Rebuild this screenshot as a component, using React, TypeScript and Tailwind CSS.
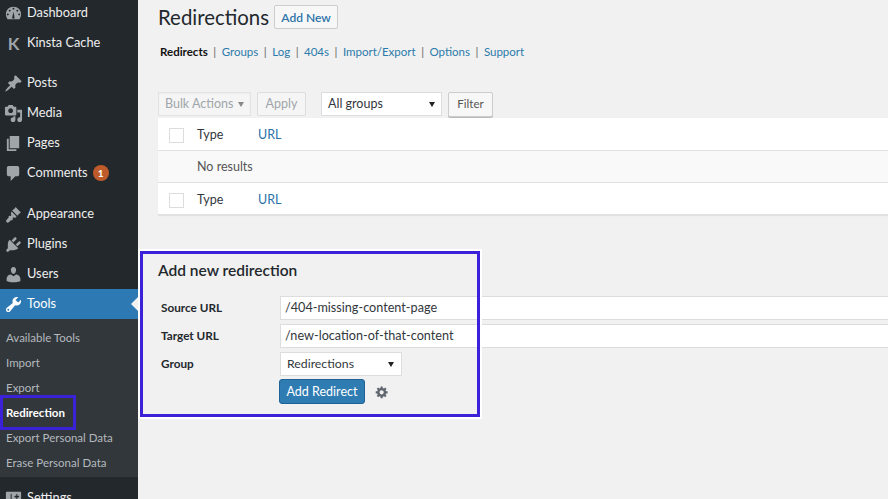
const font = "font-['Lato',sans-serif]"

// wp-admin menu glyphs
const icons: Record<string, string> = {
  dashboard:
    "M3.76 16h12.48c1.1-1.43 1.76-3.21 1.76-5.14C18 6.18 14.42 3 10 3S2 6.18 2 10.86c0 1.93.66 3.71 1.76 5.14zM10 4c.55 0 1 .45 1 1s-.45 1-1 1-1-.45-1-1 .45-1 1-1zM6 6c.55 0 1 .45 1 1s-.45 1-1 1-1-.45-1-1 .45-1 1-1zm8 0c.55 0 1 .45 1 1s-.45 1-1 1-1-.45-1-1 .45-1 1-1zm-5.37 9.35s-.1-.78.08-1.55l1.33-5.71L11 14c.24.7.27 1.35.27 1.35H8.63zM4 10c.55 0 1 .45 1 1s-.45 1-1 1-1-.45-1-1 .45-1 1-1zm12 0c.55 0 1 .45 1 1s-.45 1-1 1-1-.45-1-1 .45-1 1-1z",
  post: "M10.44 3.02l1.82-1.82 6.36 6.35-1.83 1.82c-1.05-.68-2.48-.57-3.41.36l-.75.75c-.92.93-1.04 2.35-.35 3.41l-1.83 1.82-2.41-2.41-2.8 2.79c-.42.42-3.38 2.71-3.8 2.29s1.86-3.39 2.28-3.81l2.79-2.79L4.1 9.36l1.83-1.82c1.05.69 2.48.57 3.4-.36l.75-.75c.93-.92 1.05-2.35.36-3.41z",
  media:
    "M13 11V4c0-.55-.45-1-1-1h-1.67L9 1H5L3.67 3H2c-.55 0-1 .45-1 1v7c0 .55.45 1 1 1h10c.55 0 1-.45 1-1zM7 4.5c1.38 0 2.5 1.12 2.5 2.5S8.38 9.5 7 9.5 4.5 8.38 4.5 7 5.62 4.5 7 4.5zM14 6h5v10.5c0 1.38-1.12 2.5-2.5 2.5S14 17.88 14 16.5s1.12-2.5 2.5-2.5c.17 0 .34.02.5.05V9h-3V6zm-4 8.05V13h2v3.5c0 1.38-1.12 2.5-2.5 2.5S7 17.88 7 16.5 8.12 14 9.5 14c.17 0 .34.02.5.05z",
  page: "M6 15V2h10v13H6zm-1 1h8v2H3V5h2v11z",
  comment: "M5 2h9c1.1 0 2 .9 2 2v7c0 1.1-.9 2-2 2h-2l-5 5v-5H5c-1.1 0-2-.9-2-2V4c0-1.1.9-2 2-2z",
  brush:
    "M12.2 2.2l5.6 5.6c-.9.3-1.8 1-2.3 2l-1.4 1.6-5.5-5.5 1.6-1.5c1-.5 1.7-1.4 2-2.2zM7.9 6.8l5.3 5.3-1.5 1.5-1.7-.6-.9.9.3 1.2-1.1 1.1-.7-.3-2.6 2.3c-.6.5-1.7.5-2.3-.1-.6-.6-.6-1.6-.1-2.2l2.3-2.7-.3-.8 1.1-1.1 1.2.3.9-.9-.6-1.7z",
  plugin:
    "M13.11 4.36L9.87 7.6 8 5.73l3.24-3.24c.35-.34 1.05-.2 1.56.32.52.51.66 1.21.31 1.55zm-8 1.77l.91-1.12 9.01 9.01-1.19.84c-.71.71-2.63 1.16-3.82 1.16H6.14L4.9 17.26c-.59.59-1.54.59-2.12 0-.59-.58-.59-1.53 0-2.12l1.24-1.24v-3.88c0-1.13.4-3.18 1.09-3.89zm7.26 3.97l3.24-3.24c.34-.35 1.04-.21 1.55.31.52.51.66 1.21.31 1.55l-3.24 3.25z",
  users:
    "M10 9.25c-2.27 0-2.73-3.44-2.73-3.44C7 4.02 7.82 2 9.97 2c2.16 0 2.98 2.02 2.71 3.81 0 0-.41 3.44-2.68 3.44zm0 2.57L12.72 10c2.39 0 4.52 2.33 4.52 4.53v2.49s-3.65 1.13-7.24 1.13c-3.65 0-7.24-1.13-7.24-1.13v-2.49c0-2.25 1.94-4.48 4.47-4.48z",
  tools:
    "M16.68 9.77c-1.34 1.34-3.3 1.67-4.95.99l-5.41 6.52c-.99.99-2.59.99-3.58 0s-.99-2.59 0-3.57l6.52-5.42c-.68-1.65-.35-3.61.99-4.95 1.28-1.28 3.12-1.62 4.72-1.06l-2.89 2.89 2.82 2.82 2.86-2.87c.53 1.58.18 3.39-1.08 4.65zM3.81 16.21c.4.39 1.04.39 1.43 0 .4-.4.4-1.04 0-1.43-.39-.4-1.03-.4-1.43 0-.39.39-.39 1.03 0 1.43z",
  settings:
    "M18 16V4c0-.55-.45-1-1-1H3c-.55 0-1 .45-1 1v12c0 .55.45 1 1 1h14c.55 0 1-.45 1-1zM8 11h1c.55 0 1 .45 1 1s-.45 1-1 1H8v1.5c0 .28-.22.5-.5.5s-.5-.22-.5-.5V13H6c-.55 0-1-.45-1-1s.45-1 1-1h1V5.5c0-.28.22-.5.5-.5s.5.22.5.5V11zm5-2h-1c-.55 0-1-.45-1-1s.45-1 1-1h1V5.5c0-.28.22-.5.5-.5s.5.22.5.5V7h1c.55 0 1 .45 1 1s-.45 1-1 1h-1v5.5c0 .28-.22.5-.5.5s-.5-.22-.5-.5V9z",
  gear: "M18 12h-2.18c-.17.7-.44 1.35-.81 1.93l1.54 1.54-2.1 2.1-1.54-1.54c-.58.36-1.23.64-1.91.81V19H8v-2.18c-.68-.17-1.33-.45-1.91-.81l-1.54 1.54-2.12-2.12 1.54-1.54c-.36-.58-.64-1.23-.81-1.91H1V9h2.18c.17-.7.45-1.35.81-1.94L2.45 5.52l2.12-2.1L6.09 4.96c.58-.37 1.23-.64 1.91-.81V2h3v2.15c.68.17 1.33.44 1.91.81l1.54-1.54 2.12 2.12-1.54 1.52c.37.59.64 1.24.81 1.94H18v3zm-8.5 1.5c1.66 0 3-1.34 3-3s-1.34-3-3-3-3 1.34-3 3 1.34 3 3 3z",
}

function Icon({ name, className = "h-[19px] w-[19px]" }: { name: string; className?: string }) {
  return (
    <svg viewBox="0 0 20 20" className={className} fill="currentColor">
      <path d={icons[name]} />
    </svg>
  )
}

function MenuItem({ icon, label, active, children }: { icon: React.ReactNode; label: string; active?: boolean; children?: React.ReactNode }) {
  return (
    <div className={`relative flex h-[30px] shrink-0 items-center text-[12.8px] ${active ? "bg-[#2d79b3] text-white" : "text-[#eeeeee]"}`}>
      <span className={`flex w-[27px] shrink-0 justify-center ${active ? "text-white" : "text-[#a0a5aa]"}`}>{icon}</span>
      <span className="pb-[1px]">{label}</span>
      {children}
    </div>
  )
}

function Sidebar() {
  const subItems = ["Available Tools", "Import", "Export", "Redirection", "Export Personal Data", "Erase Personal Data"]
  return (
    <aside className="flex h-full w-[138px] shrink-0 flex-col overflow-hidden bg-[#23282d]">
      <div className="h-px shrink-0 -mt-[3px]" />
      <MenuItem icon={<Icon name="dashboard" />} label="Dashboard" />
      <MenuItem icon={<span className="text-[17px] font-bold leading-none">K</span>} label="Kinsta Cache" />
      <div className="h-[10px] shrink-0" />
      <MenuItem icon={<Icon name="post" />} label="Posts" />
      <MenuItem icon={<Icon name="media" />} label="Media" />
      <MenuItem icon={<Icon name="page" />} label="Pages" />
      <MenuItem icon={<Icon name="comment" />} label="Comments">
        <span className="ml-[5px] flex h-[16px] w-[16px] items-center justify-center rounded-full bg-[#bf5a2b] text-[10px] font-bold text-white">1</span>
      </MenuItem>
      <div className="h-[11px] shrink-0" />
      <MenuItem icon={<Icon name="brush" />} label="Appearance" />
      <MenuItem icon={<Icon name="plugin" />} label="Plugins" />
      <MenuItem icon={<Icon name="users" />} label="Users" />
      <MenuItem icon={<Icon name="tools" />} label="Tools" active>
        <span className="absolute right-0 top-[8px] h-0 w-0 border-y-[7px] border-r-[7px] border-y-transparent border-r-[#f1f1f1]" />
      </MenuItem>
      <div className="flex shrink-0 flex-col bg-[#32373c] pb-[1px] pt-[7px]">
        {subItems.map((item) => (
          <div key={item} className={`flex h-[25px] items-center pb-[1px] pl-[6px] text-[11.5px] ${item === "Redirection" ? "font-bold text-white" : "text-[#b4b9be]"}`}>
            {item}
          </div>
        ))}
      </div>
      <div className="mt-[6px]">
        <MenuItem icon={<Icon name="settings" />} label="Settings" />
      </div>
    </aside>
  )
}

function Tabs() {
  const links = ["Groups", "Log", "404s", "Import/Export", "Options", "Support"]
  return (
    <div className="ml-[2px] mt-[9px] flex h-[18px] items-center text-[11.5px]">
      <span className="font-bold text-[#111]">Redirects</span>
      {links.map((link) => (
        <span key={link} className="flex items-center">
          <span className="mx-[5.5px] text-[#666]">|</span>
          <span className="text-[#2b7bab]">{link}</span>
        </span>
      ))}
    </div>
  )
}

function HeaderRow({ height }: { height: string }) {
  return (
    <div className={`flex items-center bg-white pt-[3px] text-[12.5px] ${height}`}>
      <span className="ml-[11px] h-[15px] w-[15px] border border-[#dddddd] bg-white" />
      <span className="ml-[13px] w-[61px] text-[#32373c]">Type</span>
      <span className="text-[#2b72a8]">URL</span>
    </div>
  )
}

function Caret({ color }: { color: string }) {
  return <span className={`h-0 w-0 border-x-[3.5px] border-t-[5px] border-x-transparent ${color}`} />
}

function Toolbar() {
  return (
    <div className="mt-[30px] flex h-[26px] items-center text-[12.5px]">
      <div className="flex h-[24px] w-[93px] items-center justify-between border border-[#e3e3e3] bg-[#f5f5f5] px-[6px] pt-[1px] text-[#a0a5aa] shadow-[inset_0_1px_2px_rgba(0,0,0,0.04)]">
        Bulk Actions
        <Caret color="border-t-[#888]" />
      </div>
      <div className="ml-[6px] flex h-[24px] w-[49px] items-center justify-center rounded-[2px] border border-[#dddddd] bg-[#f5f5f5] pt-[1px] text-[#a0a5aa]">Apply</div>
      <div className="ml-[15px] flex h-[24px] w-[121px] items-center justify-between border border-[#dddddd] bg-white px-[6px] pt-[1px] text-[#32373c]">
        All groups
        <Caret color="border-t-[#222]" />
      </div>
      <div className="ml-[6px] flex h-[25px] w-[45px] items-center justify-center rounded-[2px] border border-[#cccccc] bg-[#f7f7f7] text-[11.5px] text-[#555] shadow-[0_1px_0_#bbb]">Filter</div>
    </div>
  )
}

function FormRow({ label, children }: { label: string; children: React.ReactNode }) {
  return (
    <div className="flex items-center">
      <label className="w-[122px] shrink-0 pl-[3px] text-[11.75px] font-bold text-[#23282d]">{label}</label>
      {children}
    </div>
  )
}

function AddForm() {
  return (
    <div className="mt-[46px]">
      <h2 className="text-[15.5px] font-semibold leading-[18px] text-[#23282d]">Add new redirection</h2>
      <div className="mt-[17px] flex flex-col gap-[4px]">
        <FormRow label="Source URL">
          <div className="-mr-[4px] flex h-[24px] flex-1 items-center border border-[#dddddd] bg-white pl-[4px] pt-[1px] text-[12.65px] text-[#32373c]">/404-missing-content-page</div>
        </FormRow>
        <FormRow label="Target URL">
          <div className="-mr-[4px] flex h-[24px] flex-1 items-center border border-[#dddddd] bg-white pl-[4px] pt-[1px] text-[12.65px] text-[#32373c]">/new-location-of-that-content</div>
        </FormRow>
        <FormRow label="Group">
          <div className="flex h-[24px] w-[122px] items-center justify-between border border-[#dddddd] bg-white pl-[6px] pr-[7px] pt-[1px] text-[12.3px] text-[#32373c]">
            Redirections
            <Caret color="border-t-[#222]" />
          </div>
        </FormRow>
      </div>
      <div className="ml-[121px] mt-[3px] flex items-center">
        <div className="flex h-[25px] w-[86px] items-center justify-center rounded-[3px] border border-[#1d6396] bg-[#2f7cb3] pt-[1px] text-[12.5px] text-white">Add Redirect</div>
        <Icon name="gear" className="ml-[10px] h-[14px] w-[14px] text-[#5f666d]" />
      </div>
    </div>
  )
}

export default function App() {
  return (
    <div className={`relative flex h-[499px] w-[888px] overflow-hidden bg-[#f1f1f1] ${font}`}>
      <Sidebar />
      <main className="min-w-0 flex-1 pl-[20px]">
        <div className="flex h-[34px] items-center">
          <h1 className="text-[20.4px] leading-none text-[#23282d]">Redirections</h1>
          <div className="ml-[5px] flex h-[24px] w-[64px] items-center justify-center rounded-[2px] border border-[#cccccc] bg-[#f7f7f7] pt-[1px] text-[12px] font-semibold text-[#2b72a8]">Add New</div>
        </div>
        <Tabs />
        <Toolbar />
        <div className="-mr-[4px] mt-[1px] border-b border-[#e1e1e1] bg-white shadow-[0_1px_1px_rgba(0,0,0,0.06)]">
          <HeaderRow height="h-[32px]" />
          <div className="flex h-[33px] items-center border-y border-[#e1e1e1] bg-[#f9f9f9] pl-[39px] pt-[2px] text-[12.5px] text-[#555]">No results</div>
          <HeaderRow height="h-[31px]" />
        </div>
        <AddForm />
      </main>
      <div className="pointer-events-none absolute left-[140px] top-[251px] h-[166px] w-[340px] border-[3px] border-[#3b22d8] outline outline-[2px] outline-white" />
      <div className="pointer-events-none absolute left-0 top-[395px] h-[35px] w-[76px] border-[3px] border-[#3b22d8]" />
    </div>
  )
}
